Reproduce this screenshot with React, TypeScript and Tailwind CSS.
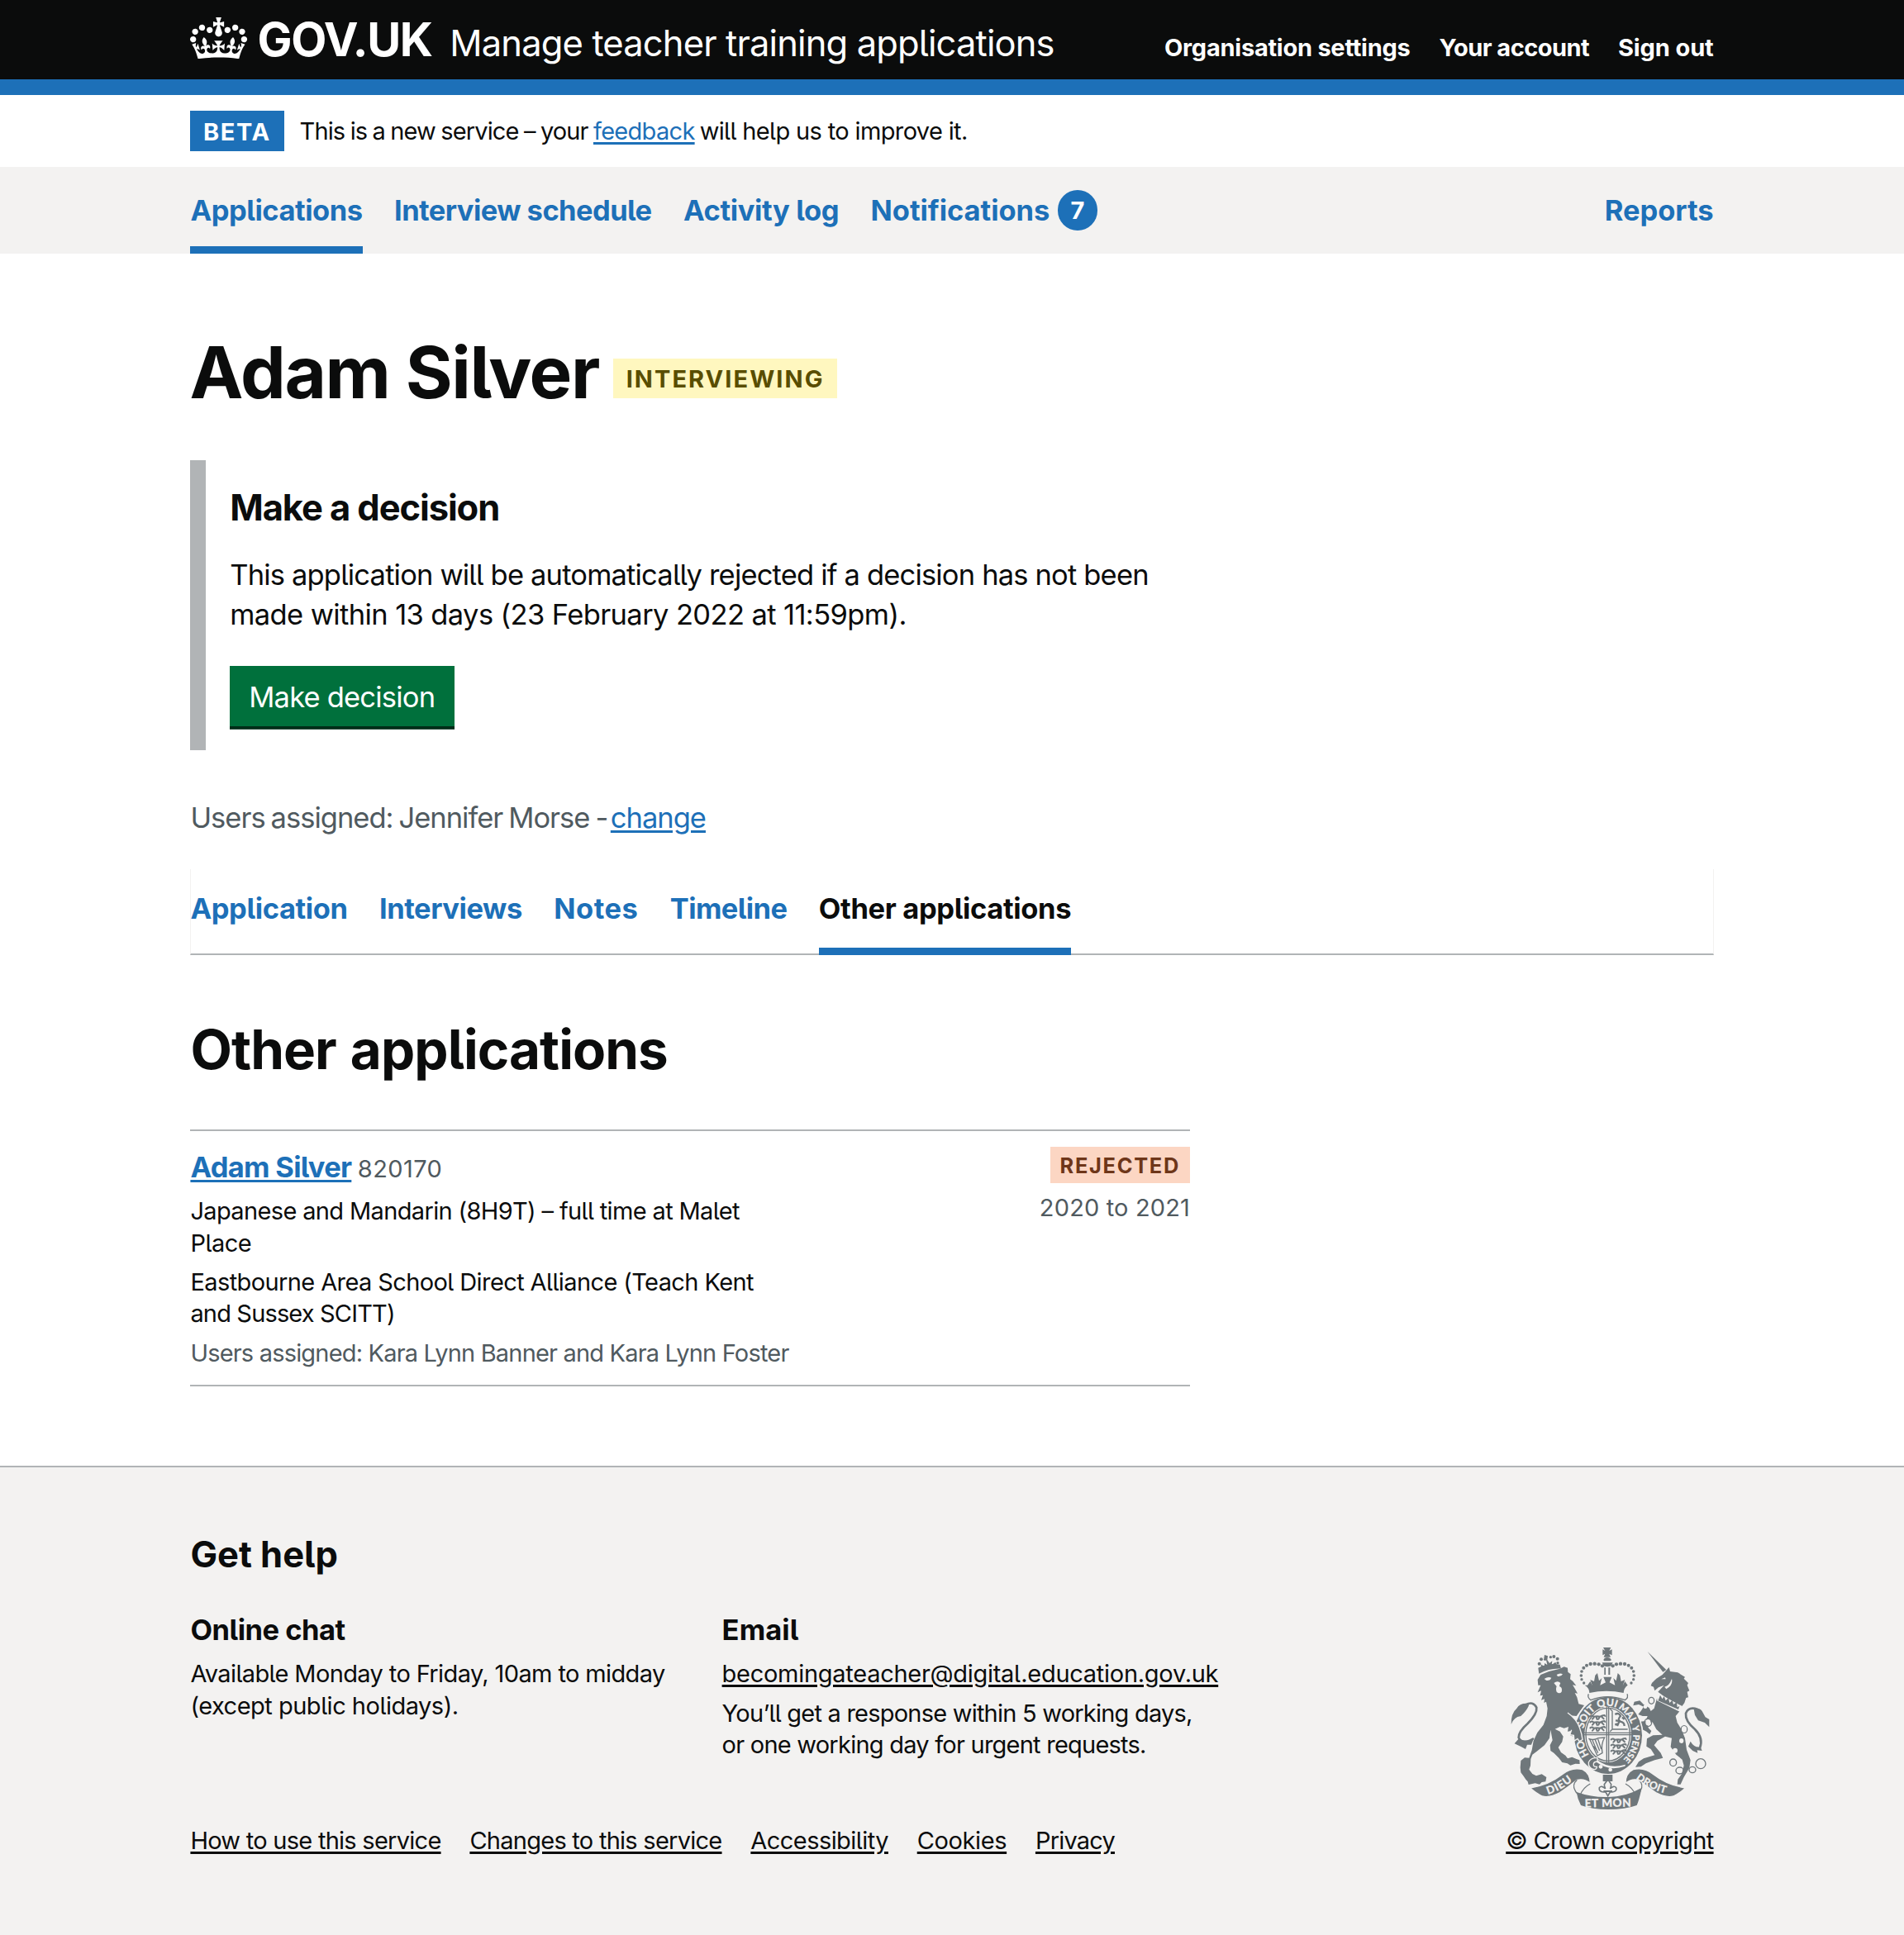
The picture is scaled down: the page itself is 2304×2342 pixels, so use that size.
import type { ReactNode } from 'react';

function Crown() {
  return (
    <svg viewBox="0 0 132 97" className="mt-[20.5px] h-[50.8px] w-[69.1px] shrink-0 self-start" fill="currentColor" aria-hidden="true">
      <path
        fillRule="evenodd"
        d="M25 30.2c3.5 1.5 7.7-.2 9.1-3.7 1.5-3.6-.2-7.8-3.9-9.2-3.6-1.4-7.6.3-9.1 3.9-1.4 3.5.3 7.5 3.9 9zM9 39.5c3.6 1.5 7.8-.2 9.2-3.7 1.5-3.6-.2-7.8-3.9-9.1-3.6-1.5-7.6.2-9.1 3.8-1.4 3.5.3 7.5 3.8 9zM4.4 57.2c3.5 1.5 7.7-.2 9.1-3.8 1.5-3.6-.2-7.7-3.9-9.1-3.5-1.5-7.6.3-9.1 3.8-1.4 3.5.3 7.6 3.9 9.1zm38.3-21.4c3.5 1.5 7.7-.2 9.1-3.8 1.5-3.6-.2-7.7-3.9-9.1-3.6-1.5-7.6.3-9.1 3.8-1.3 3.6.4 7.7 3.9 9.1zm64.4-5.6c-3.6 1.5-7.8-.2-9.1-3.7-1.5-3.6.2-7.8 3.8-9.2 3.6-1.4 7.7.3 9.2 3.9 1.3 3.5-.4 7.5-3.9 9zm15.9 9.3c-3.6 1.5-7.7-.2-9.1-3.7-1.5-3.6.2-7.8 3.7-9.1 3.6-1.5 7.7.2 9.2 3.8 1.5 3.5-.3 7.5-3.8 9zm4.7 17.7c-3.6 1.5-7.8-.2-9.2-3.8-1.5-3.6.2-7.7 3.9-9.1 3.6-1.5 7.7.3 9.2 3.8 1.3 3.5-.4 7.6-3.9 9.1zM89.3 35.8c-3.6 1.5-7.8-.2-9.2-3.8-1.4-3.6.2-7.7 3.9-9.1 3.6-1.5 7.7.3 9.2 3.8 1.4 3.6-.3 7.7-3.9 9.1zM69.7 17.7l8.9 4.7V9.3l-8.9 2.8c-.2-.3-.5-.6-.9-.9L72.4 0H59.6l3.5 11.2c-.3.3-.6.5-.9.9l-8.8-2.8v13.1l8.8-4.7c.3.3.6.7.9.9l-5 15.4v.1c-.2.8-.4 1.6-.4 2.4 0 4.1 3.1 7.5 7 8.1h.2c.3 0 .7.1 1 .1.4 0 .7 0 1-.1h.2c4-.6 7.1-4.1 7.1-8.1 0-.8-.1-1.7-.4-2.4V34l-5.1-15.4c.4-.2.7-.6 1-.9zM66 92.8c16.9 0 32.8 1.1 47.1 3.2 4-16.9 8.9-26.7 14-33.5l-9.6-3.4c1 4.9 1.1 7.2 0 10.2-1.5-1.4-3-4.3-4.2-8.7L108.6 76c2.8-2 5-3.2 7.5-3.3-4.4 9.4-10 11.9-13.6 11.2-4.3-.8-6.3-4.6-5.6-7.9 1-4.7 5.7-5.9 8-.5 4.3-8.7-3-11.4-7.6-8.8 7.1-7.2 7.9-13.5 2.1-21.1-8 6.1-8.1 12.3-4.5 20.8-4.7-5.4-12.1-2.5-9.5 6.2 3.4-5.2 7.9-2 7.2 3.1-.6 4.3-6.4 7.8-13.5 7.2-10.3-.9-10.9-8-11.2-13.8 2.5-.5 7.1 1.8 11 7.3L80.2 60c-4.1 4.4-8 5.3-12.3 5.4 1.4-4.4 8-11.6 8-11.6H55.5s6.4 7.2 7.9 11.6c-4.2-.1-8-1-12.3-5.4l1.4 16.4c3.9-5.5 8.5-7.7 10.9-7.3-.3 5.8-.9 12.8-11.1 13.8-7.2.6-12.9-2.9-13.5-7.2-.7-5 3.8-8.3 7.1-3.1 2.7-8.7-4.6-11.6-9.4-6.2 3.7-8.5 3.6-14.7-4.6-20.8-5.8 7.6-5 13.9 2.2 21.1-4.7-2.6-11.9.1-7.7 8.8 2.3-5.5 7.1-4.2 8.1.5.7 3.3-1.3 7.1-5.7 7.9-3.5.7-9-1.8-13.5-11.2 2.5.1 4.7 1.3 7.5 3.3l-4.7-15.4c-1.2 4.4-2.7 7.2-4.3 8.7-1.1-3-.9-5.3 0-10.2l-9.5 3.4c5 6.9 9.9 16.7 14 33.5 14.8-2.1 30.8-3.2 47.7-3.2z"
      />
    </svg>
  );
}

const BEADS: [number, number, number][] = [
  [341, 185, 5], [339, 171, 5.5], [341, 156, 5.5], [348, 143, 6], [359, 134, 6], [373, 129, 6.5], [388, 128, 6.5], [403, 130, 6.5], [416, 136, 6.5], [349, 198, 5],
];

function QuarterLions({ x, y }: { x: number; y: number }) {
  return (
    <g transform={`translate(${x} ${y})`} fill="none" stroke="currentColor" strokeWidth="6" strokeLinecap="round">
      {[0, 21, 42].map((dy) => (
        <path key={dy} transform={`translate(0 ${dy})`} d="M4 3q7-5 12 1q14-2 24 0l8-4M18 6l-6 7M26 6l3 8M38 5l-4 8M46 5l7 7M50 0q6-3 8 2" />
      ))}
    </g>
  );
}

function RoyalArms() {
  return (
    <svg viewBox="80 66 727 594" className="h-[198px] w-[242.3px]" aria-hidden="true">
      <defs>
        <path id="garter" d="M437 497A90 107 0 0 1 437 281A90 107 0 0 1 437 497" />
        <path id="dieu" d="M219 602Q266 589 318 545" />
        <path id="droit" d="M537 545Q592 590 666 603" />
      </defs>
      <g fill="currentColor">
        {/* lion */}
        <path d="M181 186L192 168L222 156L262 146L277 139L290 143L291 158L301 166L299 184L309 192L321 208L308 205L317 220L326 236L316 234L324 250L330 274L350 279L322 318L300 316L326 342L344 368L350 384L348 405L336 411L320 406L313 393L299 388L306 371L290 374L293 357L277 362L262 357L244 365L262 374L274 392L270 412L256 432L266 450L282 461L290 472L306 467L322 474L333 478L334 492L318 491L300 497L289 490L270 486L258 470L240 452L228 444L226 424L235 406L228 368L224 398L206 424L178 446L162 458L156 474L155 498L150 512L162 528L176 535L196 529L213 540L210 556L196 558L188 566L172 562L148 567L145 556L138 548L130 536L120 523L118 505L120 480L134 469L150 470L160 442L166 408L180 378L202 350L214 318L217 290L212 266L204 270L206 256L194 260L200 242L190 244L194 226L181 232L192 206L183 206Z" />
        <path d="M183 143Q220 124 262 131L266 146Q224 144 186 164Z" />
        <path d="M150 273Q118 268 105 290Q84 308 85 348Q94 322 120 318Q140 300 148 282Z" />
        <path d="M97 418L114 398Q128 412 165 404L158 422L143 422L137 438L122 430Z" />
        <circle cx="187" cy="128" r="6" /><circle cx="194" cy="112" r="6" /><circle cx="208" cy="112" r="5" /><circle cx="240" cy="102" r="6" /><circle cx="253" cy="110" r="6" /><circle cx="254" cy="125" r="5" /><circle cx="228" cy="104" r="5" />
        <path d="M206 96l12 4l-2 14l8 12l10-8l-2 14l14-10l8 20L198 152l-6-22l14 8l0-12l10 6l-4-18l-8-6Z" />
        {/* unicorn */}
        <path d="M580 84L648 150L636 158Z" />
        <path d="M634 168L658 141L662 156L690 160L716 176L712 182L728 198L724 206L732 226L724 230L728 250L720 252L714 270L704 284L690 278L636 244L618 230L640 206L620 214L606 226L602 212L592 208L596 198L612 182Z" />
        <path d="M614 254L700 296L682 318L688 342L704 368L716 398L722 440L736 478L732 506L712 540L700 566L688 566L690 548L704 528L712 498L706 476L684 458L664 430L668 398L644 392L616 408L604 424L628 452L636 470L606 478L574 490L556 502L536 503L548 484L566 472L606 460L592 438L576 428L578 400L600 388L634 386L612 366L598 340L578 344L584 362L594 372L588 384L576 374L556 364L548 348L554 338L574 336L580 318L562 318L546 312L556 300L566 284L548 276L528 280L532 266L552 262L566 276L586 288L592 300L604 290Z" />
        <path d="M748 292Q768 286 778 300L790 322L804 330L804 358L788 342L764 334L752 314Z" />
        <path d="M728 428L744 444L762 452L760 442L778 444L772 430Q750 434 736 410Z" />
        {/* imperial crown */}
        <path d="M419 69h28l-6 12l10-5v21l-10-5l5 12h-25l5-12l-9 5v-21l9 5Z" />
        <path d="M420 115Q422 106 433 105Q446 106 449 115L444 118h-21ZM415 124h39l-6 12q-14 6-27 0ZM423 142h5v26h-5ZM438 142h6v26h-6Z" />
        {BEADS.map(([x, y, r]) => (
          <g key={`${x}-${y}`}>
            <circle cx={x} cy={y} r={r} />
            <circle cx={870 - x} cy={y} r={r} />
          </g>
        ))}
        <path d="M362 206l10-14l8 16l-8-22l14 6l4-22l8-8l6 28l10-10l-6 26l20-10l-8-20h30l-8 20l20 10l-6-26l10 10l6-28l8 8l4 22l14-6l-8 22l8-16l10 14q-14 10-15 28q-62-14-124 0q0-18-17-28Z" />
      </g>
      <g fill="none" stroke="currentColor" strokeLinecap="round">
        <path strokeWidth="8" d="M164 401Q124 424 112 396Q112 374 145 345Q180 310 177 287Q165 262 137 277" />
        <path strokeWidth="8" d="M770 434Q784 398 752 366Q716 336 719 308Q730 282 762 294" />
        <g strokeWidth="4">
          <ellipse cx="594" cy="262" rx="10" ry="12" /><ellipse cx="582" cy="341" rx="13" ry="14" /><ellipse cx="713" cy="366" rx="11" ry="13" /><ellipse cx="673" cy="487" rx="12" ry="13" /><ellipse cx="697" cy="516" rx="14" ry="12" /><ellipse cx="743" cy="513" rx="12" ry="11" /><circle cx="773" cy="491" r="18" />
        </g>
      </g>
      {/* light details on the supporters */}
      <g fill="#f3f2f1">
        <path d="M205 183q14-10 26-4q-4 12-18 10ZM250 168q12-8 22-2q-6 10-18 8ZM240 198q14-10 24 0q-4 8-4 12q12 4 8 20q-8 10-18 0q-4-10 0-20Z" />
        <ellipse cx="582" cy="341" rx="9" ry="11" /><ellipse cx="713" cy="366" rx="9" ry="11" /><ellipse cx="680" cy="443" rx="9" ry="9" /><ellipse cx="703" cy="408" rx="8" ry="9" /><ellipse cx="572" cy="284" rx="7" ry="7" />
        <path d="M630 184l14-6l2 6ZM642 212q18-4 26-30q6 24-20 38Z" />
        <path d="M620 236L702 280L712 286L700 304L614 262Z" />
      </g>
      <path fill="currentColor" d="M620 258l6-16l8 14l6-10l6 16l10-10l4 18l10-10l4 16l12-8l2 18l8-4l-4 12L618 262Z" />
      {/* garter */}
      <ellipse cx="437" cy="388" rx="128" ry="145" fill="#f3f2f1" />
      <ellipse cx="437" cy="388" rx="123" ry="140" fill="currentColor" />
      <path fill="#f3f2f1" d="M374 238Q435 222 500 238Q508 246 498 258Q470 244 436 244Q400 246 374 258Q364 250 374 238Z" />
      <path fill="none" stroke="currentColor" strokeWidth="4" d="M366 238Q360 250 374 260Q435 236 498 260Q512 252 506 238" />
      <ellipse cx="436" cy="385" rx="85" ry="101" fill="#f3f2f1" />
      <ellipse cx="436" cy="385" rx="80" ry="96" fill="none" stroke="currentColor" strokeWidth="4" />
      <g fill="none" stroke="currentColor" strokeWidth="4">
        <path d="M432 284V486M439 284V486M350 379H522M350 386H522" />
        <path d="M366 400Q384 408 402 398L424 396Q410 420 416 452L398 462M370 402L398 462M380 406L400 452M390 404L406 444M400 402L412 438M384 428L398 446" />
        <path d="M444 292L452 300V366H508M452 366L444 374" />
        <path strokeWidth="7" d="M462 312q14-8 20 6q-12 12-2 20q16 2 16 16M464 334l14 2l-8 18M488 322l8 8M462 350l8-4" />
      </g>
      <QuarterLions x={368} y={316} />
      <QuarterLions x={444} y={400} />
      <g fill="#f3f2f1" fontFamily="Lato, sans-serif" fontWeight="700">
        <g fontSize="37" stroke="#f3f2f1" strokeWidth="1">
          <text><textPath href="#garter" startOffset="13%">HO</textPath></text>
          <text><textPath href="#garter" startOffset="29%">SOIT</textPath></text>
          <text><textPath href="#garter" startOffset="44%">QUI</textPath></text>
          <text fontSize="35"><textPath href="#garter" startOffset="56%">MAL</textPath></text>
          <text fontSize="33"><textPath href="#garter" startOffset="69.5%">Y</textPath></text>
          <text fontSize="32"><textPath href="#garter" startOffset="74.5%">PENSE</textPath></text>
        </g>
        <path d="M398 478Q440 512 500 494L498 500Q440 520 396 486Z" />
        <circle cx="410" cy="502" r="7" /><circle cx="445" cy="513" r="7" />
      </g>
      <path d="M398 470q-24-2-32 16q-2 22 20 26q10 0 10-10q-14 2-12-10q2-10 14-8Z" fill="currentColor" stroke="#f3f2f1" strokeWidth="4" />
      {/* foreleg resting on the garter */}
      <path fill="currentColor" stroke="#f3f2f1" strokeWidth="4" d="M290 306Q322 328 334 362Q342 384 344 404L332 410L326 400L314 408L312 388L298 386L304 368" />
      {/* motto scroll */}
      <g fill="currentColor">
        {[false, true].map((flip) => (
          <g key={String(flip)} transform={flip ? 'translate(872 0) scale(-1 1)' : undefined}>
            <path stroke="#f3f2f1" strokeWidth="4" d="M154 579Q222 568 270 530Q304 502 344 512Q372 526 372 562Q352 544 324 550Q292 576 262 596Q224 616 198 609Q178 600 154 579Z" />
            <path d="M324 550Q304 568 318 590Q324 602 336 604Q346 578 372 564" fill="#f3f2f1" stroke="currentColor" strokeWidth="4" />
          </g>
        ))}
        <path d="M322 594Q380 614 437 612Q500 612 552 582Q558 578 557 588Q548 628 541 642Q500 657 437 657Q378 657 338 642Q326 620 322 594Z" />
        <path d="M418 531h35v24h-35Z" />
        <path d="M436 548l12 18q0 10-4 16q14-14 22-4q4 14-14 16l-8 0l-8 14l-8-14l-8 0q-18-2-15-16q8-10 22 4q-4-8-4-16Z" fill="#f3f2f1" stroke="currentColor" strokeWidth="5" />
        <path d="M420 588h32v6h-32Z" />
      </g>
      <g fill="#f3f2f1" stroke="#f3f2f1" fontFamily="Lato, sans-serif" fontWeight="700">
        <text fontSize="39" letterSpacing="3"><textPath href="#dieu">DIEU</textPath></text>
        <text fontSize="37" letterSpacing="1.5"><textPath href="#droit">DROIT</textPath></text>
        <text x="352" y="648" fontSize="41" textLength="168" transform="rotate(-1 436 640)">ET MON</text>
      </g>
    </svg>
  );
}

function Link({ className = '', children }: { className?: string; children: ReactNode }) {
  return (
    <a href="#" className={`underline decoration-[2.5px] underline-offset-[3px] ${className}`}>
      {children}
    </a>
  );
}

const CONTAINER = 'mx-auto w-[1843.2px]';

export default function App() {
  return (
    <div className="flex min-h-[2342px] flex-col bg-white font-['Inter',sans-serif] text-[#0b0c0c] [font-feature-settings:'cv05']">
      <header className="bg-[#0b0c0c] text-white">
        <div className={`${CONTAINER} flex h-[96px] items-baseline whitespace-nowrap leading-[96px]`}>
          <Crown />
          <span className="ml-[12px] text-[56px] font-bold tracking-[-1.35px]">GOV.UK</span>
          <span className="ml-[21.6px] text-[43.5px] tracking-[-0.865px]">Manage teacher training applications</span>
          <nav className="ml-auto flex gap-[35px] text-[29px] font-bold">
            <a href="#" className="tracking-[-0.253px]">Organisation settings</a>
            <a href="#" className="tracking-[-0.55px]">Your account</a>
            <a href="#" className="tracking-[-0.12px]">Sign out</a>
          </nav>
        </div>
        <div className="h-[19.2px] bg-[#1d70b8]" />
      </header>

      <div className={`${CONTAINER} flex h-[86.4px] items-center whitespace-nowrap text-[29px] leading-[48px]`}>
        <strong className="h-[48.6px] w-[113.5px] bg-[#1d70b8] pl-[15.5px] leading-[51px] tracking-[1.64px] text-white">BETA</strong>
        <p className="mt-[2px] ml-[18.7px]">
          <span className="tracking-[-0.87px] [word-spacing:-0.95px]">This is a new service – your </span>
          <Link className="tracking-[-0.7px] text-[#1d70b8]">feedback</Link>
          <span className="-ml-[1.5px] tracking-[-0.64px]"> will help us to improve it.</span>
        </p>
      </div>

      <div className="bg-[#f3f2f1]">
        <nav className={`${CONTAINER} flex h-[105.6px] gap-[38.4px] whitespace-nowrap text-[34.5px] leading-[88.4px] font-bold text-[#1d70b8]`}>
          <a href="#" className="border-y-[9.6px] border-t-transparent border-b-[#1d70b8] tracking-[-0.47px]">Applications</a>
          <a href="#" className="py-[9.6px] tracking-[-0.563px]">Interview schedule</a>
          <a href="#" className="py-[9.6px] tracking-[-0.36px]">Activity log</a>
          <a href="#" className="flex tracking-[-0.05px]">
            <span className="py-[9.6px]">Notifications</span>
            <span className="ml-[9.5px] flex size-[48.4px] items-center justify-center self-center rounded-full bg-[#1d70b8] text-[29px] leading-none tracking-normal text-white">7</span>
          </a>
          <a href="#" className="ml-auto py-[9.6px] tracking-[-0.034px]">Reports</a>
        </nav>
      </div>

      <main className={`${CONTAINER} pt-[95.7px]`}>
        <div className="flex h-[96px] items-center whitespace-nowrap">
          <h1 className="-ml-[1px] text-[87px] leading-[97.5px] font-bold tracking-[-1.4px]">Adam Silver</h1>
          <strong className="mt-[14px] ml-[17.2px] h-[48px] w-[270.6px] bg-[#fff7bf] pl-[15.5px] text-[29px] leading-[49px] tracking-[2.05px] text-[#594d00]">INTERVIEWING</strong>
        </div>

        <section className="mt-[58px] h-[351px] border-l-[19.2px] border-[#b1b4b6] pt-[29.6px] pl-[28.8px]">
          <h2 className="text-[43.5px] leading-[57.6px] font-bold tracking-[-1.1px]">Make a decision</h2>
          <p className="mt-[28.4px] text-[34.5px] leading-[48px] whitespace-nowrap">
            <span className="tracking-[-0.825px]">This application will be automatically rejected if a decision has not been</span>
            <br />
            <span className="tracking-[-0.61px]">made within 13 days (23 February 2022 at 11:59pm).</span>
          </p>
          <button className="mt-[37.7px] block h-[73px] w-[271.4px] bg-[#00703c] pt-[1.5px] pl-[23px] text-left text-[34.5px] leading-[71.5px] tracking-[-0.8px] whitespace-nowrap text-white shadow-[0_3.84px_0_#002d18]">
            Make decision
          </button>
        </section>

        <p className="mt-[58.4px] text-[34.5px] leading-[48px] whitespace-nowrap text-[#505a5f]">
          <span className="tracking-[-1px] [word-spacing:-1.7px]">Users assigned: Jennifer Morse - </span>
          <Link className="-ml-[3.5px] tracking-[-1px] text-[#1d70b8]">change</Link>
        </p>

        <nav className="mt-[37.6px] flex h-[104px] gap-[38.4px] border-x border-b-2 border-x-[#f3f2f1] border-b-[#b1b4b6] text-[34.5px] leading-[96px] font-bold whitespace-nowrap text-[#1d70b8]">
          <a href="#" className="-ml-[1px] tracking-[-0.4px]">Application</a>
          <a href="#" className="tracking-[-0.45px]">Interviews</a>
          <a href="#" className="tracking-[0.5px]">Notes</a>
          <a href="#" className="tracking-[-0.6px]">Timeline</a>
          <a href="#" className="-mb-[2px] border-b-[9.6px] border-[#1d70b8] tracking-[-0.35px] text-[#0b0c0c]">Other applications</a>
        </nav>

        <h2 className="mt-[77px] text-[65.5px] leading-[76.8px] font-bold tracking-[-0.93px] [word-spacing:2.4px]">Other applications</h2>

        <article className="mt-[57px] flex h-[311px] w-[1209.6px] justify-between border-y-2 border-[#b1b4b6] pt-[19.2px] text-[29px] leading-[38.2px] whitespace-nowrap">
          <div className="flex flex-col gap-[9.5px]">
            <p className="mt-[2.4px] leading-[45.6px]">
              <Link className="text-[34.5px] font-bold tracking-[-0.7px] text-[#1d70b8]">Adam Silver</Link>
              <span className="ml-[7.5px] tracking-[0.4px] text-[#505a5f]">820170</span>
            </p>
            <p>
              <span className="tracking-[-0.641px]">Japanese and Mandarin (8H9T) – full time at Malet</span>
              <br />
              <span className="tracking-[-0.5px]">Place</span>
            </p>
            <p>
              <span className="tracking-[-0.6px]">Eastbourne Area School Direct Alliance (Teach Kent</span>
              <br />
              <span className="tracking-[-0.842px]">and Sussex SCITT)</span>
            </p>
            <p className="tracking-[-0.815px] text-[#505a5f]">Users assigned: Kara Lynn Banner and Kara Lynn Foster</p>
          </div>
          <div className="flex flex-col items-end">
            <strong className="h-[44.2px] w-[169px] bg-[#fcd6c3] pl-[11.5px] text-[25.4px] leading-[46px] tracking-[1.71px] text-[#6e3619]">REJECTED</strong>
            <p className="mt-[10.8px] tracking-[0.15px] text-[#505a5f]">2020 to 2021</p>
          </div>
        </article>
      </main>

      <footer className="mt-[96.4px] flex-1 border-t-2 border-[#b1b4b6] bg-[#f3f2f1] pt-[77px] text-[29px] leading-[38.4px] whitespace-nowrap">
        <div className={`${CONTAINER} flex items-end justify-between`}>
          <div>
            <h2 className="text-[43.5px] leading-[57.6px] font-bold tracking-[-0.03px]">Get help</h2>
            <div className="mt-[38.5px] grid grid-cols-[643.2px_auto]">
              <div>
                <h3 className="mb-[9.8px] text-[34.5px] leading-[48px] font-bold tracking-[-0.5px]">Online chat</h3>
                <p className="leading-[38.8px]">
                  <span className="tracking-[-0.62px]">Available Monday to Friday, 10am to midday</span>
                  <br />
                  <span className="tracking-[-0.5px]">(except public holidays).</span>
                </p>
              </div>
              <div>
                <h3 className="mb-[9.8px] text-[34.5px] leading-[48px] font-bold tracking-[0.09px]">Email</h3>
                <p>
                  <Link className="tracking-[-0.281px]">becomingateacher@digital.education.gov.uk</Link>
                </p>
                <p className="mt-[9.6px]">
                  <span className="tracking-[-0.776px]">You’ll get a response within 5 working days,</span>
                  <br />
                  <span className="tracking-[-0.763px]">or one working day for urgent requests.</span>
                </p>
              </div>
            </div>
            <div className="mt-[77.5px] flex gap-[34.8px]">
              <Link className="tracking-[-0.735px]">How to use this service</Link>
              <Link className="tracking-[-0.739px]">Changes to this service</Link>
              <Link className="tracking-[-0.56px]">Accessibility</Link>
              <Link className="tracking-[-0.386px]">Cookies</Link>
              <Link className="tracking-[-0.8px]">Privacy</Link>
            </div>
          </div>
          <div className="flex flex-col items-end text-[#6f777b]">
            <div className="mr-[4.8px]">
              <RoyalArms />
            </div>
            <Link className="mt-[18.5px] tracking-[-0.65px] text-[#0b0c0c]">© Crown copyright</Link>
          </div>
        </div>
      </footer>
    </div>
  );
}
